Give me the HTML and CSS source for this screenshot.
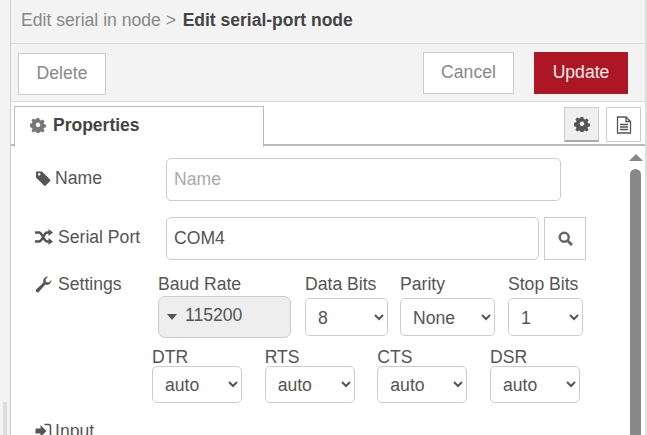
FILE: index.html
```html
<!DOCTYPE html>
<html lang="en">
<head>
<meta charset="utf-8">
<title>Edit serial-port node</title>
<link rel="stylesheet" href="styles.css">
</head>
<body>
<aside class="gutter"><span class="grip"></span></aside>
<main class="tray">
  <header class="title">
    <span class="crumb">Edit serial in node</span><span class="sep">&gt;</span><strong class="current">Edit serial-port node</strong>
  </header>
  <div class="toolbar">
    <button class="btn btn-delete" type="button">Delete</button>
    <div class="actions">
      <button class="btn btn-cancel" type="button">Cancel</button>
      <button class="btn btn-update" type="button">Update</button>
    </div>
  </div>
  <div class="tabs">
    <div class="tab">
      <svg class="icon tab-gear" viewBox="0 0 16 16"><use href="#gear"/></svg>
      <span>Properties</span>
    </div>
    <div class="tab-tools">
      <span class="tool tool-on"><svg class="icon tool-gear" viewBox="0 0 16 16"><use href="#gear"/></svg></span>
      <span class="tool">
        <svg class="doc" viewBox="0 0 16 18"><path d="M1.5 1h8.5l4.5 4.500V17h-13z M10 1v4.500h4.500 M4 8.500h8 M4 11h8 M4 13.500h8" fill="none" stroke="#555" stroke-width="1.300"/></svg>
      </span>
    </div>
  </div>
  <div class="body">
    <form class="form">
      <div class="row row-name">
        <label class="label">
          <svg class="icon ic-tag" viewBox="0 0 16 16"><path d="M1 1.500h6l8 8a1.200 1.200 0 0 1 0 1.700l-4.300 4.300a1.200 1.200 0 0 1-1.700 0l-8-8zM4.200 3a1.300 1.300 0 1 0 .01 0z" fill-rule="evenodd" fill="#555"/></svg>
          Name
        </label>
        <input class="input input-name" placeholder="Name">
      </div>
      <div class="row row-port">
        <label class="label">
          <svg class="icon ic-shuffle" viewBox="0 0 18 16"><path d="M0 3.500h4c3.500 0 4.700 9 8.200 9h2M0 12.500h4c3.500 0 4.700-9 8.200-9h2" fill="none" stroke="#555" stroke-width="2.700"/><path d="M13.500 0L18 3.500 13.500 7zM13.500 9L18 12.500 13.500 16z" fill="#555"/></svg>
          Serial Port
        </label>
        <input class="input input-port" value="COM4">
        <button class="search" type="button" aria-label="Search">
          <svg viewBox="0 0 14 14"><circle cx="5.800" cy="5.800" r="4.200" fill="none" stroke="#666" stroke-width="2.300"/><path d="M8.800 8.800L13 13" stroke="#666" stroke-width="2.600"/></svg>
        </button>
      </div>
      <div class="settings">
        <label class="label label-settings">
          <svg class="icon ic-wrench" viewBox="0 0 16 16"><path d="M15.500 3.800a4.300 4.300 0 0 1-5.700 4.300L3.700 14.800a1.600 1.600 0 0 1-2.400-2.300L8 6.200A4.300 4.300 0 0 1 12.500.5L9.800 3.200l.6 2.400 2.400.6z" fill="#555"/></svg>
          Settings
        </label>
        <div class="fields">
          <div class="field-row row-a">
            <div class="field f-baud">
              <span class="flabel">Baud Rate</span>
              <div class="combo"><span class="caret"></span>115200</div>
            </div>
            <div class="field f-data">
              <span class="flabel">Data Bits</span>
              <select class="select"><option>8</option></select>
            </div>
            <div class="field f-parity">
              <span class="flabel">Parity</span>
              <select class="select"><option>None</option></select>
            </div>
            <div class="field f-stop">
              <span class="flabel">Stop Bits</span>
              <select class="select"><option>1</option></select>
            </div>
          </div>
          <div class="field-row row-b">
            <div class="field f-auto"><span class="flabel">DTR</span><select class="select"><option>auto</option></select></div>
            <div class="field f-auto"><span class="flabel">RTS</span><select class="select"><option>auto</option></select></div>
            <div class="field f-auto"><span class="flabel">CTS</span><select class="select"><option>auto</option></select></div>
            <div class="field f-auto"><span class="flabel">DSR</span><select class="select"><option>auto</option></select></div>
          </div>
        </div>
      </div>
      <label class="label label-input">
        <svg class="icon ic-signin" viewBox="0 0 16 16"><path d="M0 5.500h5V2l6 6-6 6v-3.500H0z" fill="#555"/><path d="M9 1.500h4a2 2 0 0 1 2 2v9a2 2 0 0 1-2 2H9" fill="none" stroke="#555" stroke-width="1.600"/></svg>
        Input
      </label>
    </form>
    <div class="scrollbar">
      <span class="arrow"></span>
      <span class="thumb"></span>
    </div>
  </div>
</main>
<svg class="defs" aria-hidden="true">
  <symbol id="gear" viewBox="0 0 16 16">
    <path fill-rule="evenodd" d="M6.700 1h2.600l.4 2 1.400.6 1.700-1.100 1.800 1.800-1.100 1.700.6 1.400 2 .4v2.600l-2 .4-.6 1.400 1.100 1.700-1.800 1.800-1.700-1.100-1.400.6-.4 2H6.700l-.4-2-1.400-.6-1.700 1.100-1.800-1.800 1.100-1.700-.6-1.400-2-.4V6.800l2-.4.600-1.400-1.100-1.700 1.800-1.800 1.700 1.100 1.400-.6zM8 5.700a2.300 2.300 0 1 0 .01 0z" transform="translate(0 -.1)"/>
  </symbol>
</svg>
</body>
</html>
```
FILE: styles.css
```css
* { box-sizing: border-box; }
html, body { height: 100%; }
body {
  margin: 0;
  height: 435px;
  overflow: hidden;
  display: flex;
  font-family: "Liberation Sans", Arial, sans-serif;
  color: #555;
  background: #fff;
}
.defs { display: none; }
.gutter {
  width: 11px;
  flex: none;
  background: #f3f3f3;
  border-right: 1px solid #ccc;
  display: flex;
  align-items: flex-end;
  padding-left: 3px;
}
.grip { width: 4px; height: 33px; background: #ddd; }
.tray { flex: 1; min-width: 0; display: flex; flex-direction: column; border-right: 2px solid #ddd; }
.title {
  height: 44px;
  flex: none;
  background: #f3f3f3;
  border-bottom: 1px solid #ddd;
  padding: 11px 0 0 10px;
  font-size: 17.6px;
  line-height: 19px;
  color: #888;
}
.sep { margin: 0 6.5px 0 5px; }
.current { color: #444; font-size: 17.5px; }
.toolbar {
  height: 58px;
  flex: none;
  background: #f3f3f3;
  border-bottom: 1px solid #ddd;
  padding: 8px 17px 0 7px;
  display: flex;
  justify-content: space-between;
  align-items: flex-start;
}
.actions { display: flex; gap: 20px; }
.btn {
  height: 42px;
  font: 17.6px "Liberation Sans", Arial, sans-serif;
  border: 1px solid #ccc;
  background: #fff;
  color: #888;
  padding: 0 0 2px;
}
.btn-delete { width: 88px; margin-top: 1px; }
.btn-cancel { width: 91px; }
.btn-update { width: 94px; background: #ad1625; border-color: #ad1625; color: #eee; }
.tabs {
  height: 44px;
  flex: none;
  display: flex;
  justify-content: space-between;
  padding: 4px 4px 0 3px;
  border-bottom: 2px solid #bbb;
  position: relative;
}
.tab {
  width: 250px;
  height: 41px;
  background: #fff;
  border: 1px solid #bbb;
  border-bottom: none;
  display: flex;
  align-items: center;
  gap: 7px;
  padding: 0 0 4px 15px;
  font-size: 17.5px;
  font-weight: 700;
  color: #444;
  position: relative;
  z-index: 1;
}
.icon { flex: none; }
.tab-gear { width: 16px; height: 16px; fill: #777; }
.tab-tools { display: flex; gap: 7px; margin-top: 1px; }
.tool {
  width: 35px;
  height: 35px;
  border: 1px solid #ccc;
  display: flex;
  align-items: center;
  justify-content: center;
  background: #fff;
}
.tool-on { background: #efefef; border-bottom: 2px solid #aaa; }
.tool-gear { width: 16px; height: 16px; fill: #555; }
.doc { width: 16px; height: 18px; }
.body { flex: 1; min-height: 0; display: flex; justify-content: space-between; overflow: hidden; }
.form { flex: 1; padding: 12px 0 0 24px; font-size: 17.6px; }
.label { display: flex; align-items: center; gap: 3px; color: #555; font-size: 17.6px; line-height: 18px; }
.row { display: flex; align-items: center; }
.row .label { width: 131px; flex: none; margin-bottom: 3px; }
.ic-tag { width: 16px; height: 16px; margin-right: 1px; }
.ic-shuffle { width: 18px; height: 16px; margin-right: 2px; }
.ic-wrench { width: 17px; height: 17px; margin-right: 3px; }
.ic-signin { width: 17px; height: 16px; }
.input {
  height: 43px;
  border: 1px solid #ccc;
  border-radius: 5px;
  font: 17.6px "Liberation Sans", Arial, sans-serif;
  color: #555;
  padding: 0 7px 1px;
  background: #fff;
}
.input::placeholder { color: #aaa; }
.input-name { width: 395px; }
.input-port { width: 373px; }
.row-port { margin-top: 16px; }
.search {
  width: 42px;
  height: 43px;
  margin-left: 5px;
  padding: 0;
  background: #fff;
  border: 1px solid #ccc;
  display: flex;
  align-items: center;
  justify-content: center;
}
.search svg { width: 15px; height: 15px; }
.settings { display: flex; margin-top: 15px; position: relative; }
.label-settings { width: 118px; flex: none; align-self: flex-start; }
.fields { display: flex; flex-direction: column; }
.field-row { display: flex; }
.field { display: flex; flex-direction: column; }
.flabel { font-size: 17.6px; line-height: 18px; color: #555; }
.row-a { height: 73px; }
.f-baud { width: 147px; margin-left: 5px; }
.f-data { width: 95px; }
.f-parity { width: 108px; }
.f-stop { width: 75px; }
.combo {
  width: 133px;
  height: 42px;
  margin-top: 3px;
  background: #eee;
  border: 1px solid #ccc;
  border-radius: 7px;
  display: flex;
  align-items: center;
  padding: 0 0 4px 8px;
  gap: 8px;
}
.caret { width: 0; height: 0; border: 5px solid transparent; border-top: 6px solid #555; border-bottom: 0; margin-top: 3px; }
.select {
  height: 38px;
  margin-top: 5px;
  border: 1px solid #ccc;
  border-radius: 5px;
  background: #fff;
  font: 17.6px "Liberation Sans", Arial, sans-serif;
  color: #555;
  padding: 2px 8px 0;
}
.f-data .select { width: 83px; }
.f-parity .select { width: 95px; }
.f-stop .select { width: 75px; }
.row-b { margin-left: -1px; gap: 22.67px; }
.f-auto .select { width: 90px; height: 37px; margin-top: 0; padding-top: 0; }
.label-input { margin-top: 19px; }
.scrollbar { width: 16px; flex: none; position: relative; }
.arrow {
  position: absolute;
  top: 8px;
  left: 0;
  width: 0;
  height: 0;
  border: 7px solid transparent;
  border-bottom: 7px solid #888;
  border-top: 0;
}
.thumb {
  position: absolute;
  top: 23px;
  left: 1px;
  width: 11px;
  height: 280px;
  background: #888;
  border-radius: 6px 6px 0 0;
}
```
